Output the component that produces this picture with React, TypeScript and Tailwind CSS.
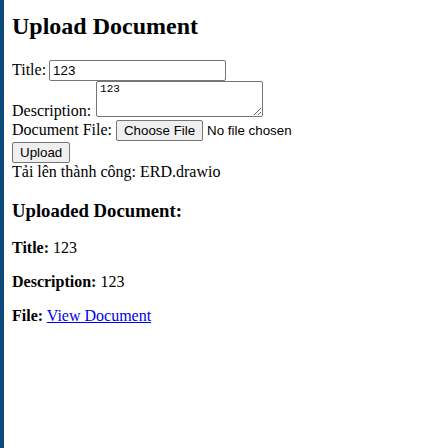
import React from "react";

export default function App() {
  const sans = { fontFamily: '"Liberation Sans", Arial, sans-serif' };
  return (
    <div
      className="min-h-[448px] w-[427px] border-l-4 border-[#0c4a7c] bg-white pl-2 pt-3 text-[16px] text-black"
      style={{ fontFamily: '"Liberation Serif", "Times New Roman", serif' }}
    >
      <h2 className="text-[24px] font-bold leading-[28px]">Upload Document</h2>

      <div className="mt-5 flex items-baseline gap-[3px]">
        <label className="leading-[18px]">Title:</label>
        <input
          className="h-[21px] w-[177px] rounded-[2px] border border-[#767676] px-[3px] text-[13.33px] leading-normal outline-none"
          style={sans}
          defaultValue="123"
        />
      </div>

      <div className="flex h-[39px] items-end gap-[5px]">
        <label className="leading-[18px]">Description:</label>
        <textarea
          className="h-[36px] w-[167px] self-start rounded-[2px] border border-[#767676] px-[3px] py-[1px] text-[11px] leading-[13px] outline-none"
          style={{ fontFamily: '"Liberation Mono", "Courier New", monospace' }}
          defaultValue="123"
        />
      </div>

      <div className="flex items-baseline gap-[4px]">
        <label className="leading-[18px]">Document File:</label>
        <span className="flex items-baseline gap-[4px] text-[13.33px]" style={sans}>
          <span className="flex h-[21px] items-center rounded-[2px] border border-[#767676] bg-[#efefef] px-[7px]">
            Choose File
          </span>
          <span>No file chosen</span>
        </span>
      </div>

      <div className="mt-px flex">
        <button
          className="flex h-[21px] items-center rounded-[2px] border border-[#767676] bg-[#efefef] px-[7px] text-[13.33px]"
          style={sans}
        >
          Upload
        </button>
      </div>

      <p className="leading-[18px]">Tải lên thành công: ERD.drawio</p>

      <h3 className="mt-[19px] text-[18.72px] font-bold leading-[22px]">Uploaded Document:</h3>
      <p className="mt-[17px] leading-[18px]">
        <strong>Title:</strong> 123
      </p>
      <p className="mt-4 leading-[18px]">
        <strong>Description:</strong> 123
      </p>
      <p className="mt-4 leading-[18px]">
        <strong>File:</strong>{" "}
        <a href="#" className="text-[#0000ee] underline">
          View Document
        </a>
      </p>
    </div>
  );
}
